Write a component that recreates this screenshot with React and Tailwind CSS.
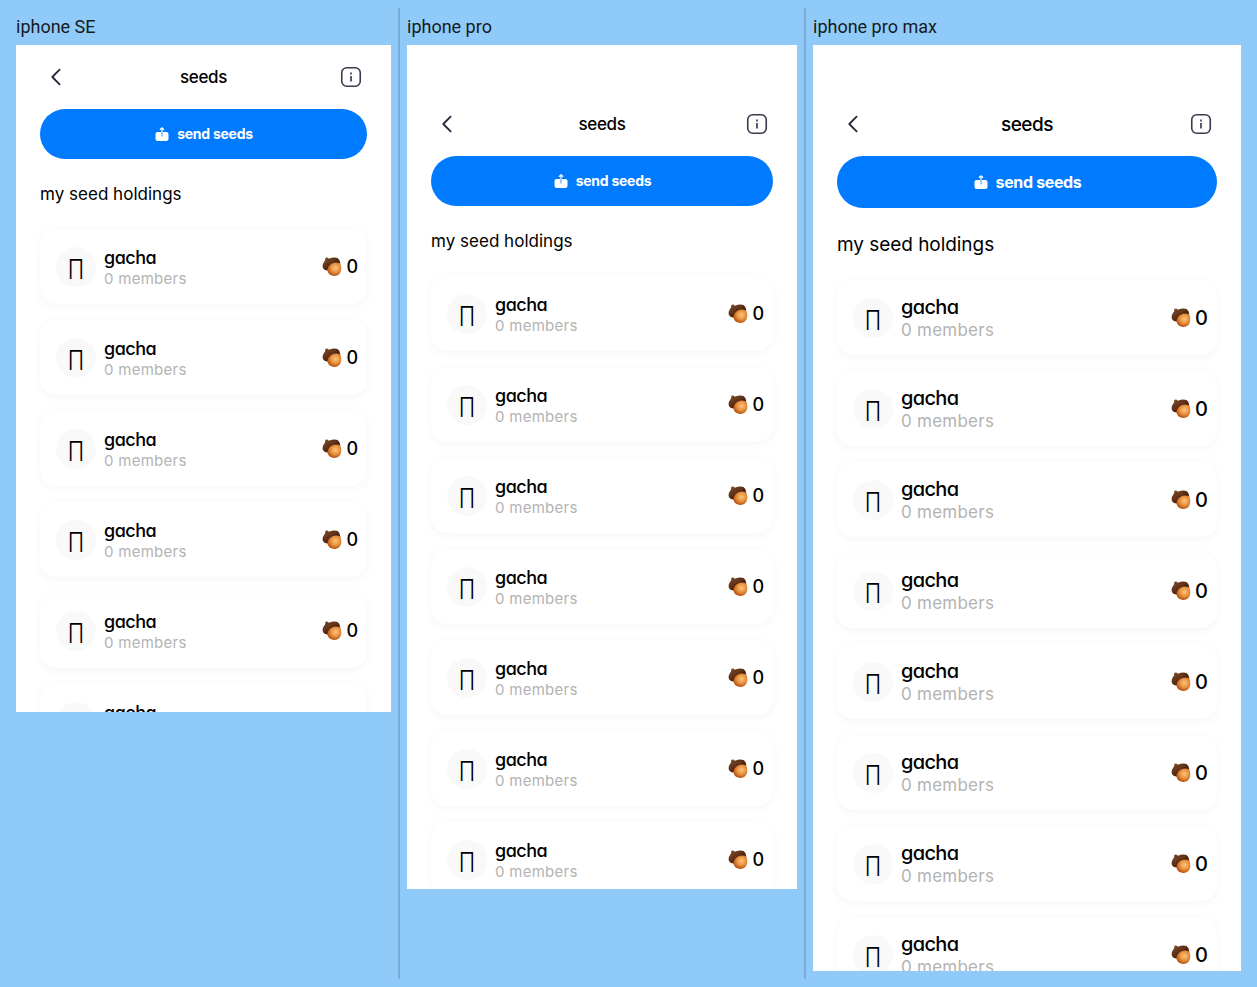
const phones = [
  {
    name: "iphone SE",
    column: "w-[390px] pl-2",
    screen: "w-[375px] h-[667px]",
    statusBar: "h-0",
    title: "pt-px text-[17px] tracking-[-0.4px]",
    button: "h-[50px]",
    buttonText: "pb-px text-[14px] tracking-[-0.25px]",
    heading: "mt-[22px] h-[26px] text-[17px] tracking-[0.02px]",
    list: "mt-[22px]",
    glyph: "translate-y-[2.5px]",
    group: "text-[18px] tracking-[-0.5px] leading-[24px]",
    members: "text-[15px] leading-[18px] tracking-[0.28px]",
    amount: "text-[18px]",
    cards: 6,
  },
  {
    name: "iphone pro",
    column: "w-[404px] pl-[7px]",
    screen: "w-[390px] h-[844px]",
    statusBar: "h-[47px]",
    title: "pt-px text-[17px] tracking-[-0.4px]",
    button: "h-[50px]",
    buttonText: "pb-px text-[14px] tracking-[-0.25px]",
    heading: "mt-[22px] h-[26px] text-[17px] tracking-[0.02px]",
    list: "mt-[22px]",
    glyph: "translate-y-[2.5px]",
    group: "text-[18px] tracking-[-0.5px] leading-[24px]",
    members: "text-[15px] leading-[18px] tracking-[0.28px]",
    amount: "text-[18px]",
    cards: 7,
  },
  {
    name: "iphone pro max",
    column: "w-[435px] pl-[7px]",
    screen: "w-[428px] h-[926px]",
    statusBar: "h-[47px]",
    title: "pt-0.5 text-[19px] tracking-[-0.5px]",
    button: "h-[52px]",
    buttonText: "text-[16px] tracking-[-0.35px]",
    heading: "mt-[24px] h-[26px] text-[19px] tracking-[-0.05px]",
    list: "mt-[22px]",
    glyph: "translate-y-[3px]",
    group: "text-[20px] tracking-[-0.65px] leading-[25px]",
    members: "text-[17px] leading-[20px] tracking-[0.25px]",
    amount: "text-[20px]",
    cards: 8,
  },
];

function BackIcon() {
  return (
    <svg className="h-6 w-6" viewBox="0 0 24 24" fill="none" stroke="#27273c" strokeWidth="1.8" strokeLinecap="round" strokeLinejoin="round">
      <path d="M15.6 4.7 8.300 12l7.300 7.300" />
    </svg>
  );
}

function InfoIcon() {
  return (
    <svg className="h-6 w-6" viewBox="0 0 24 24" fill="none" stroke="#3b3b50" strokeWidth="1.6">
      <rect x="2.75" y="2.75" width="18.5" height="18.5" rx="5" />
      <path d="M12 11v5.5" strokeWidth="1.7" />
      <path d="M12 7.6v1.800" strokeWidth="1.7" />
    </svg>
  );
}

function SendIcon() {
  return (
    <svg className="h-[14px] w-[14px] shrink-0" viewBox="0 0 14 14" fill="none">
      <path d="M2.6 5H11.4Q13.5 5 13.5 7V11.500Q13.500 14 11 14H3Q.5 14 .5 11.500V7Q.5 5 2.600 5Z" fill="#fff" />
      <path d="M6 4h2v5.300H6z" fill="#007aff" />
      <path d="M7 9.300V1M4.900 2.800 7 .8 9.100 2.800" stroke="#fff" strokeWidth="1.2" />
    </svg>
  );
}

function Acorn() {
  return (
    <svg className="h-5 w-5 shrink-0" viewBox="0 0 20 20">
      <defs>
        <radialGradient id="nut" cx="0.58" cy="0.4" r="0.6">
          <stop offset="0" stopColor="#fcc57c" />
          <stop offset="0.55" stopColor="#e8913f" />
          <stop offset="1" stopColor="#b5500f" />
        </radialGradient>
        <linearGradient id="cap" x1="0" y1="0" x2="1" y2="1">
          <stop offset="0" stopColor="#83502c" />
          <stop offset="0.6" stopColor="#4a210d" />
          <stop offset="1" stopColor="#3a1808" />
        </linearGradient>
      </defs>
      <path d="M3.200 1Q4.500 .3 5.800 .8L6.800 1.700Q12 -.2 15.500 1Q18 2.500 18.400 6.500L12 9L6.500 13.500Q3 14 1 11.200Q-.2 8 2.300 4.600Q3.600 3 3.200 1Z" fill="url(#cap)" />
      <path d="M2.500 7.500Q7 3 14.500 2.800M3 10.500Q6 5.800 13 4" stroke="#8a5532" strokeWidth="0.6" strokeDasharray="1 1" fill="none" />
      <path d="M5.400 13Q5.800 9 9.500 6.800Q14 4.600 18 6.300Q19.400 8.500 19.300 12Q19 16.800 15 18.600Q12 19.600 9.300 18.300Q5.800 17 5.400 13Z" fill="url(#nut)" />
    </svg>
  );
}

function HoldingCard({ phone }) {
  return (
    <div className="flex h-[75px] shrink-0 items-center rounded-2xl bg-white pl-4 pr-[9px] shadow-[0_2px_10px_rgba(0,0,0,0.045)]">
      <div className="flex h-10 w-10 items-center justify-center rounded-full bg-[#f9f9f9]">
        <span className={`inline-block origin-center scale-x-[0.82] text-[27px] font-light leading-none ${phone.glyph}`}>Π</span>
      </div>
      <div className="ml-2 flex flex-1 flex-col">
        <span className={`font-medium ${phone.group}`}>gacha</span>
        <span className={`text-[#b3b3b3] ${phone.members}`}>0 members</span>
      </div>
      <div className="flex items-center gap-1">
        <Acorn />
        <span className={`font-medium ${phone.amount}`}>0</span>
      </div>
    </div>
  );
}

function Phone({ phone }) {
  return (
    <section className={`shrink-0 ${phone.column}`}>
      <h2 className="h-[37px] pt-[7px] font-[Roboto] text-[18px] leading-6 text-[#161b21]">{phone.name}</h2>
      <div className={`flex flex-col overflow-hidden bg-white text-black ${phone.screen}`}>
        <div className={`shrink-0 ${phone.statusBar}`} />
        <header className="flex h-16 shrink-0 items-center justify-between px-7">
          <BackIcon />
          <span className={`font-medium ${phone.title}`}>seeds</span>
          <InfoIcon />
        </header>
        <div className="flex flex-col px-6">
          <button className={`flex items-center justify-center gap-2 rounded-full bg-[#007aff] pl-px text-white ${phone.button}`}>
            <SendIcon />
            <span className={`font-bold ${phone.buttonText}`}>send seeds</span>
          </button>
          <h3 className={`leading-[26px] ${phone.heading}`}>my seed holdings</h3>
          <div className={`flex flex-col gap-4 ${phone.list}`}>
            {Array.from({ length: phone.cards }, (_, i) => (
              <HoldingCard key={i} phone={phone} />
            ))}
          </div>
        </div>
      </div>
    </section>
  );
}

export default function App() {
  return (
    <main className="flex h-[987px] w-[1257px] overflow-hidden bg-[#90caf9] py-2 pl-2 font-[Inter,sans-serif] [font-feature-settings:'cv11']">
      <Phone phone={phones[0]} />
      <div className="w-[2px] shrink-0 bg-[#7aacd5]" />
      <Phone phone={phones[1]} />
      <div className="w-[2px] shrink-0 bg-[#7aacd5]" />
      <Phone phone={phones[2]} />
    </main>
  );
}
